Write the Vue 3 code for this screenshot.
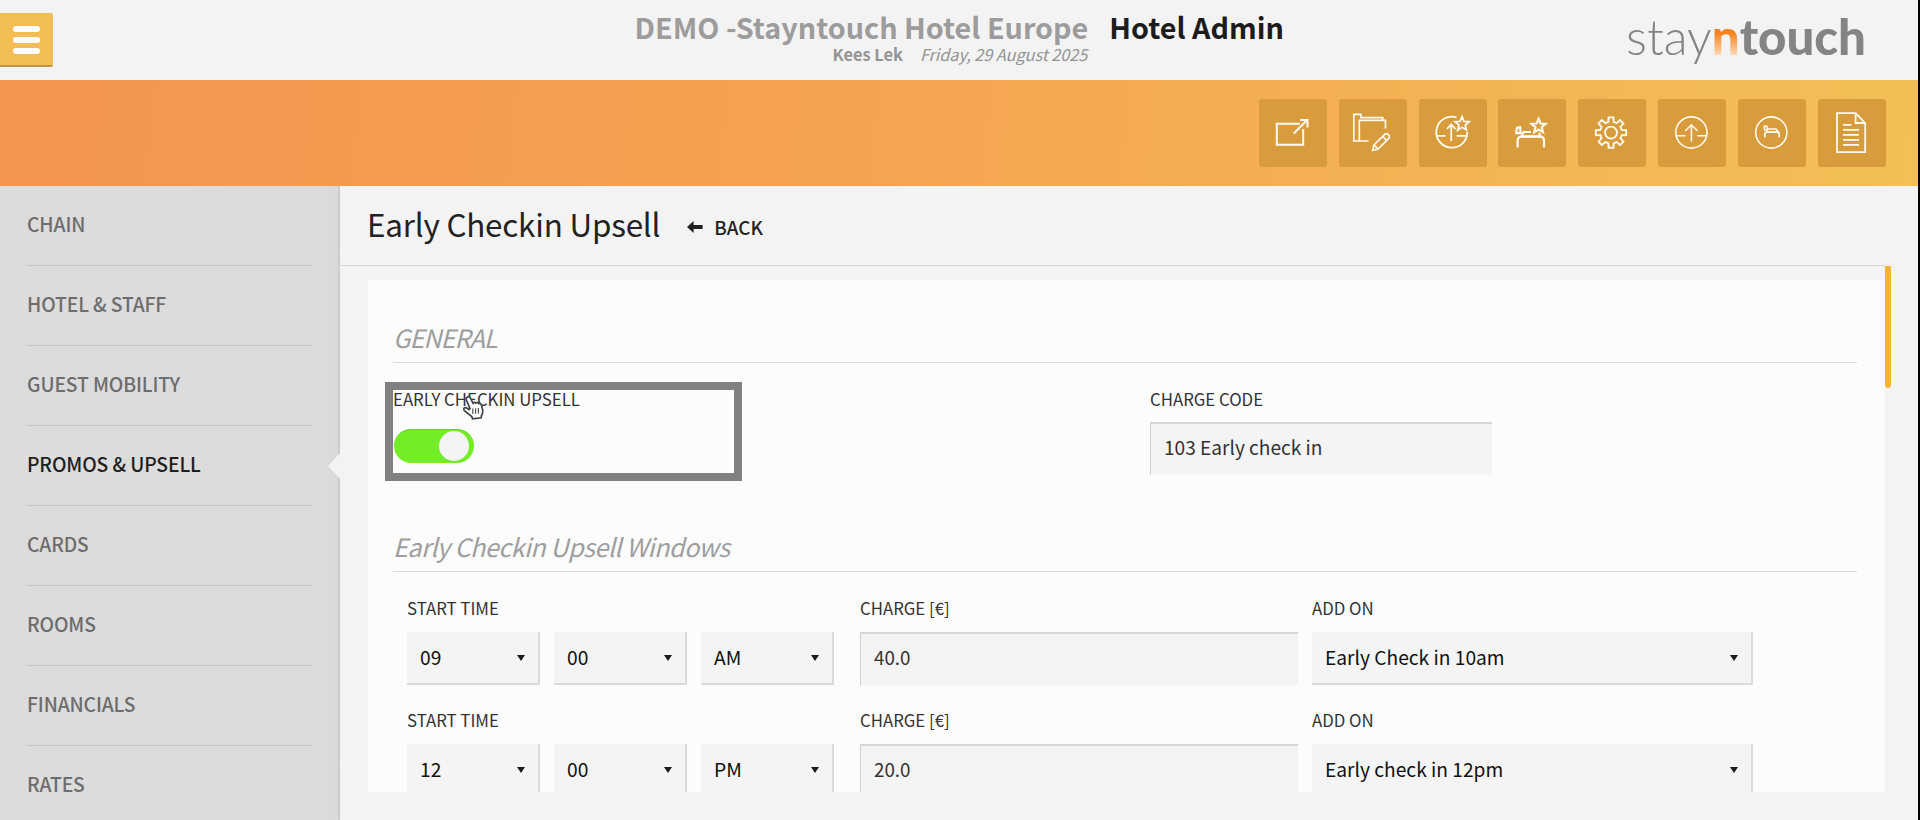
<script setup>
const menu = ['CHAIN', 'HOTEL & STAFF', 'GUEST MOBILITY', 'PROMOS & UPSELL', 'CARDS', 'ROOMS', 'FINANCIALS', 'RATES']
const active = 'PROMOS & UPSELL'

const starPath = (cx, cy, r) => {
  const pts = []
  for (let i = 0; i < 10; i++) {
    const a = -Math.PI / 2 + (i * Math.PI) / 5
    const d = i % 2 ? r * 0.45 : r
    pts.push(`${(cx + d * Math.cos(a)).toFixed(2)} ${(cy + d * Math.sin(a)).toFixed(2)}`)
  }
  return `M${pts.join('L')}Z`
}

const gearPath = (cx, cy, outer, inner) => {
  const pts = []
  const at = (deg, r) => {
    const a = (deg * Math.PI) / 180
    pts.push(`${(cx + r * Math.cos(a)).toFixed(2)} ${(cy + r * Math.sin(a)).toFixed(2)}`)
  }
  for (let i = 0; i < 8; i++) {
    const c = i * 45 - 90
    at(c - 14, inner)
    at(c - 9, outer)
    at(c + 9, outer)
    at(c + 14, inner)
  }
  return `M${pts.join('L')}Z`
}

const tools = [
  { name: 'open', w: 2, paths: ['M41 24.8H17.8V45.8H44.2V30', 'M34.7 34.5L48.3 21', 'M41 21H48.5V28.5'] },
  {
    name: 'folder', w: 1.7,
    paths: ['M29.5 42H14.8V15.3H22V18.6H43.7V21.3', 'M20.3 42V21.3H46.5V29.5', 'M33.6 51.4L35 46L46 35.2Q47.6 34 49 35.4L50 36.5Q51 38 49.8 39.3L39 50Z', 'M35 46L39 50M43.8 37.5L47.6 41.4'],
  },
  {
    name: 'upgrade-star', w: 1.8,
    paths: ['M37.5 18.4A15.5 15.5 0 1 0 48.3 33', 'M32.2 42V25.5M27.8 30L32.2 25.3L36.6 30', 'M17.5 36.8H26.5M37.5 36.8H48', starPath(43.1, 25, 7.4)],
  },
  {
    name: 'bed-star', w: 2.2,
    paths: ['M18.2 34.2L19 28.8L22.2 28.3L22.6 34.2Z', 'M33 33H25.5L23.5 37.4H42.5L41 34', 'M19.6 48.4V41.5Q19.6 38 23.5 37.6H42.5Q46 38 46 41.5V48.4', starPath(40.6, 27.2, 7.4)],
  },
  { name: 'gear', w: 1.9, paths: [gearPath(33, 33.6, 15.4, 11), 'M39 33.6A6 6 0 1 1 27 33.6A6 6 0 1 1 39 33.6Z'] },
  {
    name: 'upgrade', w: 1.6,
    paths: ['M49 33.5A15.6 15.6 0 1 1 17.8 33.5A15.6 15.6 0 1 1 49 33.5Z', 'M33.4 42.4V25.8M27.2 32L33.4 25.8L39.6 32', 'M18 36.8H27.5M39.3 36.8H48.7'],
  },
  {
    name: 'bed', w: 1.6,
    paths: ['M48.9 33.5A15.6 15.6 0 1 1 17.7 33.5A15.6 15.6 0 1 1 48.9 33.5Z', 'M26.6 31L26.2 27.2L28.8 27L29.4 31Z', 'M29.4 30H38L40.5 33H28', 'M26.8 38.6V35.5Q26.8 33 29.5 33H38.5Q41.2 33 41.2 35.5V38.4'],
  },
  {
    name: 'document', w: 1.8,
    paths: ['M37.6 14.2H19V53.2H47.2V24ZM37.6 14.2V24H47.2', 'M25 25.8H33.4M25 30.8H41M25 35.8H41M25 40.8H41M25 45.8H41'],
  },
]

const rows = [
  { time: ['09', '00', 'AM'], charge: '40.0', addOn: 'Early Check in 10am' },
  { time: ['12', '00', 'PM'], charge: '20.0', addOn: 'Early check in 12pm' },
]
</script>

<template>
  <div class="app">
    <header class="top">
      <button class="burger"><i></i><i></i><i></i></button>
      <div class="titles">
        <div class="hotel">
          <div class="name"><span>DEMO -Stayntouch Hotel Europe</span></div>
          <div class="who"><b>Kees Lek</b><em>Friday, 29 August 2025</em></div>
        </div>
        <h1>Hotel Admin</h1>
      </div>
      <div class="logo"><span class="thin">stay</span><span class="n">n</span><span class="heavy">touch</span></div>
    </header>

    <nav class="band">
      <button v-for="t in tools" :key="t.name" class="tool">
        <svg viewBox="0 0 68 68" width="68" height="68" fill="none" stroke="#fffaf0" :stroke-width="t.w">
          <path v-for="(d, i) in t.paths" :key="i" :d="d" />
        </svg>
      </button>
    </nav>

    <div class="body">
      <aside class="side">
        <a v-for="m in menu" :key="m" :class="{ on: m === active }"><span>{{ m }}</span></a>
      </aside>
      <main class="main">
        <div class="head">
          <h2>Early Checkin Upsell</h2>
          <a class="back">
            <svg width="16" height="12" viewBox="0 0 16 12"><path d="M0 6L6.6 0V4H15.6V8H6.6V12Z" fill="#222" /></svg>
            <span>BACK</span>
          </a>
        </div>
        <div class="scroller">
          <section class="panel">
            <h3 class="general">GENERAL</h3>
            <div class="pair">
              <div class="marked">
                <label><span>EARLY CHECKIN UPSELL</span></label>
                <div class="toggle"><i></i></div>
                <svg class="cursor" width="22" height="25" viewBox="0 0 22 25">
                  <path d="M5.2 2.2Q7 .8 8.3 2.8L11 8.2Q12.2 6.6 13.8 8Q15.4 6.7 16.6 8.6Q18.6 7.8 19.4 10L20.6 14.5Q21.2 18 19.4 20.5L19.2 22.8L10.6 23.8L9.8 21.6L2.4 15.6Q1 13.6 2.6 12.8Q4.2 12.2 7 14.6L8 13.6L4.4 5Q3.8 3.2 5.2 2.2Z" fill="#fff" stroke="#444" stroke-width="1.7" />
                  <path d="M10.8 13.5V19M13.6 13.2V18.7M16.4 12.9V18.4" stroke="#555" stroke-width="1.2" />
                </svg>
              </div>
              <div class="code">
                <label><span>CHARGE CODE</span></label>
                <div class="input"><span>103 Early check in</span></div>
              </div>
            </div>
            <h3 class="windows">Early Checkin Upsell Windows</h3>
            <div v-for="r in rows" :key="r.charge" class="row">
              <div class="time">
                <label><span>START TIME</span></label>
                <div class="selects">
                  <div v-for="(v, i) in r.time" :key="i" class="select">{{ v }}</div>
                </div>
              </div>
              <div class="charge">
                <label><span>CHARGE [€]</span></label>
                <div class="input">{{ r.charge }}</div>
              </div>
              <div class="addon">
                <label><span>ADD ON</span></label>
                <div class="select wide"><span>{{ r.addOn }}</span></div>
              </div>
            </div>
          </section>
          <div class="thumb"></div>
        </div>
      </main>
    </div>
  </div>
</template>

<style>
html,
body {
  margin: 0;
  background: #f2f2f2;
  overflow: hidden;
}
</style>

<style scoped>
* {
  box-sizing: border-box;
}
.app {
  width: 1920px;
  height: 820px;
  overflow: hidden;
  display: flex;
  flex-direction: column;
  border-right: 2px solid #000;
  background: #f3f3f3;
  color: #333;
  font-family: "Noto Sans CJK SC", "Open Sans", sans-serif;
}
h1,
h2,
h3 {
  margin: 0;
  white-space: nowrap;
}
button {
  border: 0;
  padding: 0;
}
span,
b,
em {
  white-space: nowrap;
}

/* Header */
.top {
  height: 80px;
  flex: none;
  display: flex;
  align-items: flex-start;
  padding-right: 52px;
}
.burger {
  width: 53px;
  height: 54px;
  margin-top: 13px;
  padding: 13px 0 0 13px;
  display: flex;
  flex-direction: column;
  gap: 5px;
  background: #f3bd56;
  border-bottom: 2px solid #bf9648;
  border-radius: 0 2px 2px 0;
}
.burger i {
  width: 27px;
  height: 6px;
  border-radius: 3px;
  background: #fff;
}
.titles {
  display: flex;
  gap: 21px;
  margin: 0 auto 0 581.5px;
}
.name,
h1 {
  height: 44px;
  line-height: 53px;
  font-size: 28.75px;
  font-weight: 700;
}
.name {
  color: #9c9c9c;
}
h1 {
  color: #1c1c1c;
}
.who {
  display: flex;
  justify-content: flex-end;
  gap: 17px;
  height: 22px;
  padding-right: 1px;
  line-height: 20px;
  font-size: 16.4px;
  color: #949494;
}
.who em {
  font-weight: 400;
  letter-spacing: -0.1px;
}
.logo {
  display: flex;
  font-family: Lato, sans-serif;
  font-size: 49.2px;
  line-height: 60px;
  margin-top: 6px;
  color: #848484;
}
.thin {
  font-weight: 300;
}
.heavy,
.n {
  font-weight: 900;
}
.n {
  color: transparent;
  background: linear-gradient(180deg, #f5821f 0, #f5821f 45%, #fbd9b8 82%);
  background-clip: text;
  -webkit-background-clip: text;
}

/* Toolbar */
.band {
  height: 106px;
  flex: none;
  display: flex;
  justify-content: flex-end;
  gap: 11.9px;
  padding: 18.5px 32px 0 0;
  background: linear-gradient(97deg, #f3944f, #f4a44f 45%, #f3bf57);
}
.tool {
  width: 68px;
  height: 68px;
  border-radius: 3px;
  background: #d99c3c;
}
.tool svg {
  display: block;
}

/* Sidebar */
.body {
  flex: 1;
  min-height: 0;
  display: flex;
}
.side {
  width: 340px;
  flex: none;
  padding: 0 27px;
  background: linear-gradient(90deg, #dcdcdc 96%, #d9d9d9);
  border-right: 2px solid #cdcdcd;
}
.side a {
  display: block;
  position: relative;
  width: 286px;
  height: 80px;
  border-bottom: 1px solid #c3c3c3;
  line-height: 77px;
  font-size: 19.3px;
  letter-spacing: -0.12px;
  font-weight: 500;
  color: #6d6d6d;
}
.side a:last-child {
  border-bottom-color: transparent;
}
.side a.on {
  color: #1f1f1f;
}
.side a.on::after {
  content: "";
  position: absolute;
  left: 301px;
  top: 26px;
  border: 14px solid transparent;
  border-left: 0;
  border-right: 13px solid #f3f3f3;
}

/* Main column */
.main {
  flex: 1;
  display: flex;
  flex-direction: column;
  min-width: 0;
}
.head {
  height: 80px;
  flex: none;
  display: flex;
  margin-right: 33px;
  padding-left: 27px;
  border-bottom: 1px solid #d8d8d8;
}
h2 {
  font-size: 31.4px;
  letter-spacing: -0.2px;
  font-weight: 400;
  line-height: 76px;
  color: #222;
}
.back {
  display: flex;
  align-items: center;
  gap: 11px;
  height: 82px;
  margin-left: 27px;
  font-size: 18.8px;
  font-weight: 500;
  color: #222;
}
.back span {
  margin-top: -2px;
}
.scroller {
  display: flex;
  align-items: flex-start;
  padding-left: 28px;
}
.panel {
  width: 1517px;
  height: 512px;
  margin-top: 14px;
  padding: 0 28px 0 25px;
  overflow: hidden;
  background: #fcfcfc;
}
.thumb {
  width: 6px;
  height: 122px;
  border-radius: 0 0 3px 3px;
  background: #f7b432;
}
h3 {
  font-size: 25.2px;
  font-weight: 400;
  font-style: italic;
  color: #9e9e9e;
  border-bottom: 1px solid #dcdcdc;
}
.general {
  height: 83px;
  padding-top: 28px;
  line-height: 58px;
  letter-spacing: -0.95px;
}
.windows {
  height: 91px;
  padding-top: 36px;
  line-height: 58px;
  letter-spacing: -0.53px;
}
.pair {
  display: flex;
  height: 118px;
  padding-top: 19px;
}
.marked {
  position: relative;
  width: 357px;
  height: 99px;
  margin-left: -8px;
  border: 8px solid #7f8082;
  background: #fcfcfd;
}
label {
  display: block;
  font-size: 16.8px;
  line-height: 22px;
  color: #333;
}
.marked label {
  line-height: 18px;
}
.toggle {
  width: 80px;
  height: 34px;
  margin: 21px 0 0 0.5px;
  padding: 1px 5px 0 0;
  border-radius: 17px;
  background: #73ed25;
  border-top: 1px solid #66d324;
  display: flex;
  justify-content: flex-end;
}
.toggle i {
  width: 30px;
  height: 30px;
  border-radius: 50%;
  background: #f4f4f6;
}
.cursor {
  position: absolute;
  left: 69px;
  top: 5px;
}
.code {
  width: 342px;
  margin-left: 408px;
  padding-top: 6px;
}
.input {
  height: 53px;
  padding-left: 13px;
  line-height: 47px;
  font-size: 19.1px;
  background: #f4f4f4;
  border-top: 2px solid #d7d7d7;
  border-left: 1px solid #cfcfcf;
}
.code .input {
  margin-top: 12px;
}
.row {
  display: flex;
  height: 112px;
  padding: 25px 0 0 14px;
}
.row label {
  margin-bottom: 13px;
}
.row .input {
  line-height: 46px;
  font-size: 18.8px;
}
.selects {
  display: flex;
  gap: 14px;
}
.select {
  position: relative;
  width: 133px;
  height: 53px;
  padding-left: 13px;
  line-height: 50px;
  font-size: 19.2px;
  color: #111;
  background: #f4f4f4;
  border-right: 2px solid #dadada;
  border-bottom: 2px solid #dadada;
}
.select::after {
  content: "";
  position: absolute;
  right: 13px;
  top: 23px;
  border: 4px solid transparent;
  border-top: 6px solid #1a1a1a;
  border-bottom: 0;
}
.charge {
  width: 438px;
  margin-left: 26px;
}
.addon {
  margin-left: 14px;
}
.wide {
  width: 441px;
}
</style>
